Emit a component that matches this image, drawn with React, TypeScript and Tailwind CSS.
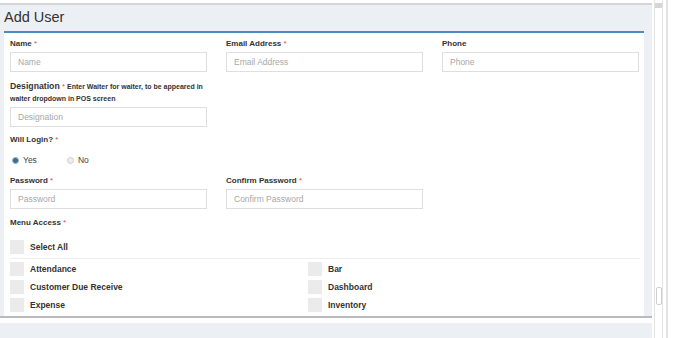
import React from "react";

// Add User modal — form with basic fields, login toggle and menu access list.

const font = { fontFamily: '"Liberation Sans", Arial, sans-serif' };

function Req() {
  return <span className="text-[#dd4b39] font-normal text-[8px]"> *</span>;
}

function Field({ label, placeholder, required }: { label: string; placeholder: string; required?: boolean }) {
  return (
    <div className="flex flex-col">
      <div className="text-[8px] leading-[10px] font-bold text-[#333]">
        {label}
        {required && <Req />}
      </div>
      <div className="mt-[3px] h-[20px] border border-[#dedede] bg-white flex items-center pl-[7px] text-[8.5px] text-[#a8a8a8]">
        {placeholder}
      </div>
    </div>
  );
}

function Check({ label }: { label: string }) {
  return (
    <div className="flex items-center h-[14px]">
      <div className="w-[14px] h-[14px] bg-[#ebebeb]" />
      <span className="ml-[6px] text-[8.5px] font-bold text-[#333]">{label}</span>
    </div>
  );
}

export default function App() {
  return (
    <div className="w-[678px] h-[338px] bg-[#eceff4] flex overflow-hidden" style={font}>
      <div className="w-[652px] flex flex-col">
        <div className="h-[3px] bg-white" />
        <div className="h-[2px] bg-[#d3d5d9]" />
        <div className="h-[26px] flex items-center pl-[4px] text-[14.5px] text-[#333]">Add User</div>
        <div className="mx-[4px] w-[640px] border-t-2 border-[#4b8bbe] bg-white h-[285px] pl-[6px] pt-[6px]">
          <div className="grid grid-cols-[197px_197px_197px] gap-x-[19px]">
            <Field label="Name" placeholder="Name" required />
            <Field label="Email Address" placeholder="Email Address" required />
            <Field label="Phone" placeholder="Phone" />
          </div>

          <div className="mt-[8px] w-[210px] text-[8px] text-[#333] font-bold leading-[12px]">
            <span className="text-[8.7px]">Designation</span>
            <Req />
            <span className="text-[7px]"> Enter Waiter for waiter, to be appeared in waiter dropdown in POS screen</span>
          </div>
          <div className="mt-[2px] w-[197px] h-[20px] border border-[#dedede] flex items-center pl-[7px] text-[8.5px] text-[#a8a8a8]">
            Designation
          </div>

          <div className="mt-[8px] text-[8px] leading-[10px] font-bold text-[#333]">
            Will Login?
            <Req />
          </div>
          <div className="mt-[9px] h-[12px] flex items-center text-[8.5px] text-[#444]">
            <div className="ml-[2px] w-[7px] h-[7px] rounded-full bg-[#3a6d93] border border-[#9bb3c6]" />
            <span className="ml-[4px]">Yes</span>
            <div className="ml-[30px] w-[7px] h-[7px] rounded-full bg-[#ececec] border border-[#cfcfcf]" />
            <span className="ml-[4px]">No</span>
          </div>

          <div className="mt-[10px] grid grid-cols-[197px_197px] gap-x-[19px]">
            <Field label="Password" placeholder="Password" required />
            <Field label="Confirm Password" placeholder="Confirm Password" required />
          </div>

          <div className="mt-[9px] text-[8px] leading-[10px] font-bold text-[#333]">
            Menu Access
            <Req />
          </div>
          <div className="mt-[12px]">
            <Check label="Select All" />
          </div>
          <div className="mt-[4px] mr-[4px] h-px bg-[#eeeeee]" />
          <div className="mt-[3px] grid grid-cols-[298px_1fr] gap-y-[4px]">
            <Check label="Attendance" />
            <Check label="Bar" />
            <Check label="Customer Due Receive" />
            <Check label="Dashboard" />
            <Check label="Expense" />
            <Check label="Inventory" />
          </div>
        </div>
        <div className="h-[2px] bg-[#b9bbbe]" />
        <div className="h-[5px] bg-white" />
      </div>
      <div className="w-[26px] flex">
        <div className="w-[2px] bg-white" />
        <div className="w-[9px] flex flex-col border-x border-[#e3e3e3] bg-white">
          <div className="h-[3px]" />
          <div className="h-[5px] bg-[#d6d6d6]" />
          <div className="flex-1 flex flex-col pt-[279px] items-center">
            <div className="w-[6px] h-[18px] border border-[#cfcfcf] rounded-[2px]" />
          </div>
        </div>
        <div className="w-[3px] bg-white" />
        <div className="w-[2px] bg-[#e3e3e3]" />
        <div className="flex-1 bg-white" />
      </div>
    </div>
  );
}
